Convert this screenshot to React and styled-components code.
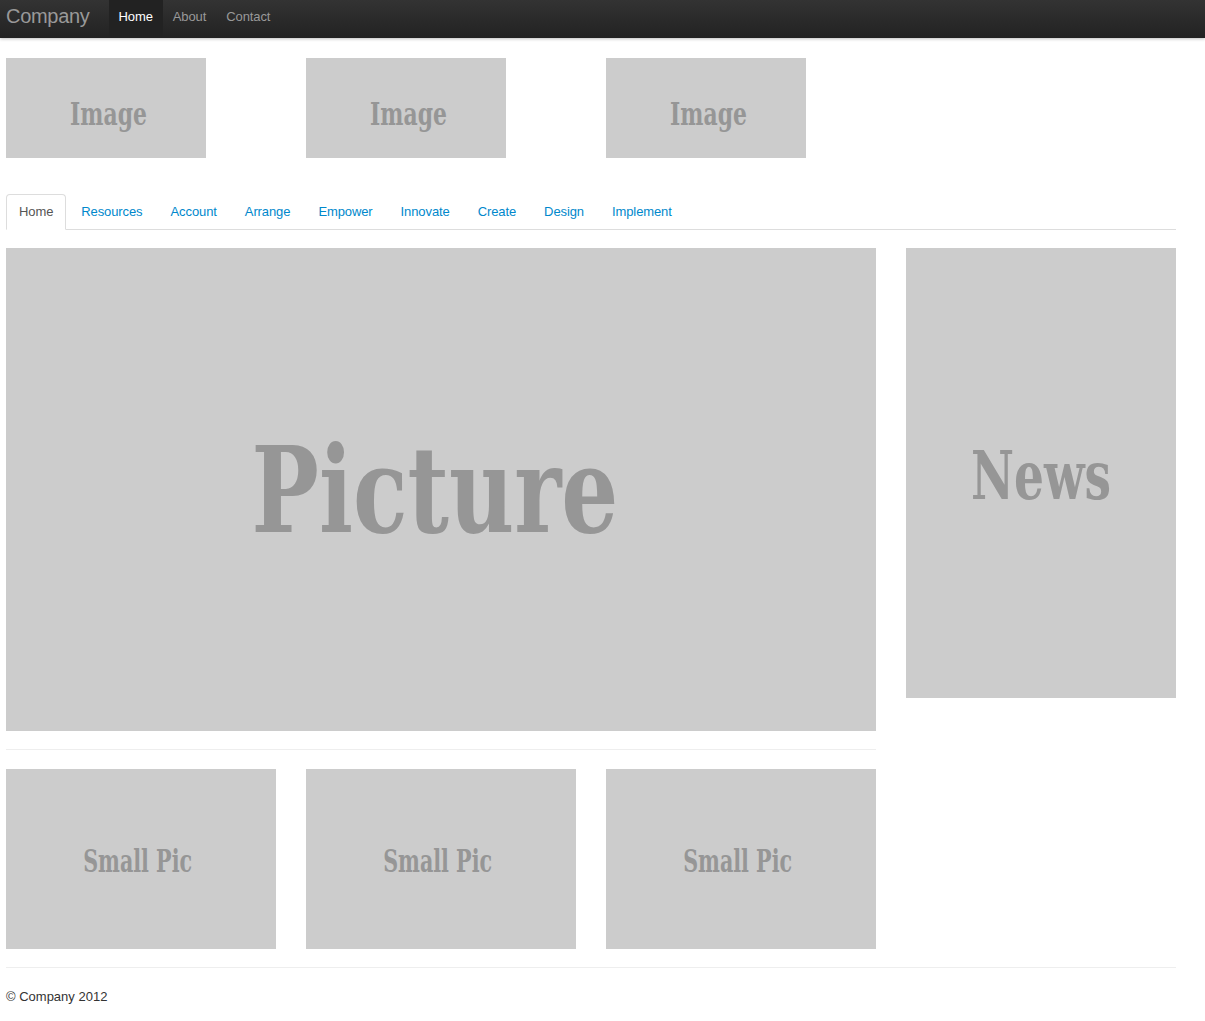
import React from 'react';
import styled, { createGlobalStyle } from 'styled-components';

const GlobalStyle = createGlobalStyle`
  html, body {
    margin: 0;
    padding: 0;
    background: #fff;
  }
  body {
    font-family: "Liberation Sans", Arial, sans-serif;
    font-size: 13px;
    line-height: 18px;
    color: #333;
  }
`

const Navbar = styled.div`
  height: 38px;
  background: linear-gradient(to bottom, #333333, #222222);
  box-shadow: 0 1px 3px rgba(0, 0, 0, 0.25);
  display: flex;
  align-items: stretch;
  padding-left: 6px;
`

const Brand = styled.a`
  font-size: 20px;
  color: #999;
  padding: 0 19px 6px 0;
  display: flex;
  align-items: center;
  letter-spacing: -0.3px;
`

const NavLink = styled.a`
  display: flex;
  align-items: center;
  padding: 0 10px 5px;
  letter-spacing: -0.1px;
  color: ${(p) => (p.active ? '#fff' : '#999')};
  background: ${(p) => (p.active ? '#222' : 'transparent')};
`

const Container = styled.div`
  width: 1170px;
  padding-left: 6px;
`

const Row = styled.div`
  display: flex;
  gap: 30px;
  margin-top: ${(p) => p.top || 0}px;
`

const Col = styled.div`
  width: ${(p) => p.w}px;
  flex: none;
`

const Placeholder = styled.div`
  width: ${(p) => p.w}px;
  height: ${(p) => p.h}px;
  background: #cccccc;
  display: flex;
  align-items: center;
  justify-content: center;
  color: #969696;
  font-family: "DejaVu Serif", serif;
  font-stretch: condensed;
  font-weight: bold;
  font-size: ${(p) => p.fs}px;
  white-space: nowrap;
`

const PlaceText = styled.span`
  display: inline-block;
  transform: scaleX(${(p) => p.sx || 1});
  margin-top: ${(p) => p.dy || 0}px;
  margin-left: ${(p) => p.dx || 0}px;
`

const Tabs = styled.ul`
  list-style: none;
  margin: 36px 0 0;
  padding: 0;
  display: flex;
  border-bottom: 1px solid #ddd;
`

const Tab = styled.li`
  margin-right: 2px;
  margin-bottom: -1px;
  a {
    display: block;
    padding: 8px 12px;
    line-height: 18px;
    letter-spacing: -0.1px;
    border: 1px solid transparent;
    border-radius: 4px 4px 0 0;
    color: #0088cc;
  }
  ${(p) =>
    p.active &&
    `a {
      color: #555;
      background: #fff;
      border-color: #ddd #ddd transparent;
    }`}
`

const Rule = styled.hr`
  border: 0;
  border-top: 1px solid #eee;
  margin: 18px 0 0;
  width: ${(p) => p.w}px;
`

const Footer = styled.footer`
  padding: 20px 0 20px;
`

const tabs = ['Home', 'Resources', 'Account', 'Arrange', 'Empower', 'Innovate', 'Create', 'Design', 'Implement']

export default function App() {
  return (
    <>
      <GlobalStyle />
      <Navbar>
        <Brand>Company</Brand>
        <NavLink active>Home</NavLink>
        <NavLink>About</NavLink>
        <NavLink>Contact</NavLink>
      </Navbar>
      <Container>
        <Row top={20}>
          {[0, 1, 2].map((i) => (
            <Col w={270} key={i}>
              <Placeholder w={200} h={100} fs={32}>
                <PlaceText sx={0.76} dy={12} dx={6}>Image</PlaceText>
              </Placeholder>
            </Col>
          ))}
        </Row>
        <Tabs>
          {tabs.map((t, i) => (
            <Tab key={t} active={i === 0}>
              <a>{t}</a>
            </Tab>
          ))}
        </Tabs>
        <Row top={18}>
          <Col w={870}>
            <Placeholder w={870} h={483} fs={120}>
              <PlaceText sx={0.83} dx={-12}>Picture</PlaceText>
            </Placeholder>
            <Rule w={870} />
            <Row top={19}>
              {[0, 1, 2].map((i) => (
                <Placeholder key={i} w={270} h={180} fs={31}>
                  <PlaceText sx={0.74} dy={4} dx={-6}>Small Pic</PlaceText>
                </Placeholder>
              ))}
            </Row>
          </Col>
          <Col w={270}>
            <Placeholder w={270} h={450} fs={68}>
              <PlaceText sx={0.77} dy={4}>News</PlaceText>
            </Placeholder>
          </Col>
        </Row>
        <Rule w={1170} />
        <Footer>© Company 2012</Footer>
      </Container>
    </>
  )
}
